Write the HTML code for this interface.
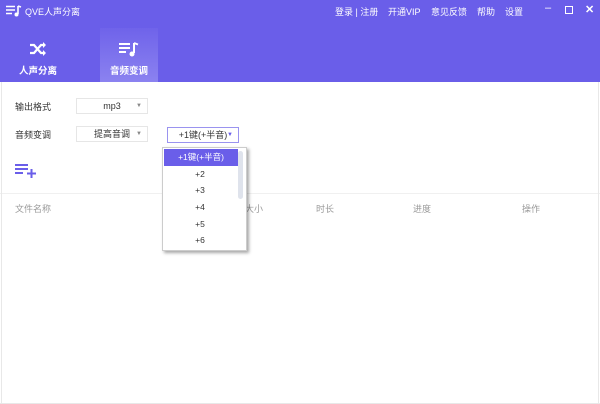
<!DOCTYPE html>
<html><head><meta charset="utf-8"><style>
*{margin:0;padding:0;box-sizing:border-box}
body{width:600px;height:404px;overflow:hidden;background:#fff;font-family:"Liberation Sans","Noto Sans CJK SC",sans-serif;font-size:9px;color:#333;position:relative}
.hd{position:absolute;left:0;top:0;width:600px;height:82px;background:#6a5ee9}
.t{position:absolute;color:#fff;font-size:9px}
.tab{position:absolute;top:28px;width:58px;height:54px;text-align:center;color:#fff;font-weight:bold;font-size:9.5px}
.sel{position:absolute;height:16px;border:1px solid #e6e6e6;background:#fff;font-size:9px;text-align:center;line-height:14px;color:#333}
.sel .a{position:absolute;right:5px;top:0;font-size:6px;color:#888}
.lbl{position:absolute;left:15px;font-size:9px;color:#333}
.col{position:absolute;top:202px;font-size:9px;color:#999}
.dd{position:absolute;left:162px;top:147px;width:85px;height:104px;background:#fff;border:1px solid #ccc;box-shadow:2px 2px 3px rgba(0,0,0,.35)}
.dd div{height:16.7px;line-height:16.7px;text-align:center;width:74px;font-size:8.5px;color:#333}
</style></head><body>
<div class="hd"></div>
<svg style="position:absolute;left:6px;top:5px" width="16" height="12" viewBox="0 0 16 12"><path d="M0 1.5h9M0 5h9M0 8.5h6" stroke="#fff" stroke-width="1.6"/><path d="M12 1v8" stroke="#fff" stroke-width="1.6"/><circle cx="10.5" cy="9.5" r="2" fill="#fff"/><path d="M12 1l3 1" stroke="#fff" stroke-width="1.6"/></svg>
<div class="t" style="left:25px;top:5px">QVE人声分离</div>
<div class="t" style="left:335px;top:5px">登录 | 注册</div>
<div class="t" style="left:388px;top:5px">开通VIP</div>
<div class="t" style="left:431px;top:5px">意见反馈</div>
<div class="t" style="left:477px;top:5px">帮助</div>
<div class="t" style="left:505px;top:5px">设置</div>
<div class="t" style="left:545px;top:2px;font-size:11px">–</div>
<div style="position:absolute;left:565px;top:6px;width:8px;height:8px;border:1.3px solid #fff"></div>
<div class="t" style="left:585px;top:3px;font-size:11px;font-weight:bold">✕</div>
<div class="tab" style="left:9px">
<svg style="margin-top:14px" width="18" height="14" viewBox="0 0 18 14"><path d="M1 3h4l7 8h4M1 11h4l7-8h4" stroke="#fff" stroke-width="2.2" fill="none"/><path d="M14 0l3 3-3 3M14 8l3 3-3 3" fill="#fff"/></svg>
<div style="margin-top:4px">人声分离</div></div>
<div class="tab" style="left:100px;background:linear-gradient(#6f63ea,#8b82f0)">
<svg style="margin-top:14px" width="20" height="15" viewBox="0 0 20 15"><path d="M0 2h11M0 6h11M0 10h7" stroke="#fff" stroke-width="2"/><path d="M15 1v10" stroke="#fff" stroke-width="2"/><circle cx="13" cy="12" r="2.5" fill="#fff"/><path d="M15 1l4 1.5" stroke="#fff" stroke-width="2"/></svg>
<div style="margin-top:3px">音频变调</div></div>
<div class="lbl" style="top:100px">输出格式</div>
<div class="sel" style="left:76px;top:98px;width:72px">mp3<span class="a">▼</span></div>
<div class="lbl" style="top:128px">音频变调</div>
<div class="sel" style="left:76px;top:126px;width:72px">提高音调<span class="a">▼</span></div>
<div class="sel" style="left:167px;top:127px;width:72px;border-color:#9a93ef">+1键(+半音)<span class="a" style="color:#6a5ee9">▼</span></div>
<svg style="position:absolute;left:15px;top:163px" width="22" height="15" viewBox="0 0 22 15"><path d="M0 2h13M0 6h13M0 10h8" stroke="#6a5ee9" stroke-width="2"/><path d="M12 10.5h9M16.5 6v9" stroke="#6a5ee9" stroke-width="2"/></svg>
<div style="position:absolute;left:0;top:193px;width:600px;height:1px;background:#f0f0f0"></div>
<div class="col" style="left:15px">文件名称</div>
<div class="col" style="left:245px">大小</div>
<div class="col" style="left:316px">时长</div>
<div class="col" style="left:413px">进度</div>
<div class="col" style="left:522px">操作</div>
<div style="position:absolute;left:1px;top:82px;width:1px;height:322px;background:#e8e8e8"></div>
<div style="position:absolute;left:598px;top:82px;width:1px;height:322px;background:#e8e8e8"></div>
<div style="position:absolute;left:0;top:403px;width:600px;height:1px;background:#e8e8e8"></div>
<div class="dd">
<div style="background:#6a5ee9;color:#fff;margin:1px 0 0 1px">+1键(+半音)</div>
<div>+2</div><div>+3</div><div>+4</div><div>+5</div><div>+6</div>
<span style="position:absolute;right:3px;top:3px;width:5px;height:48px;border-radius:3px;background:#dfe3ec"></span>
</div>
</body></html>
